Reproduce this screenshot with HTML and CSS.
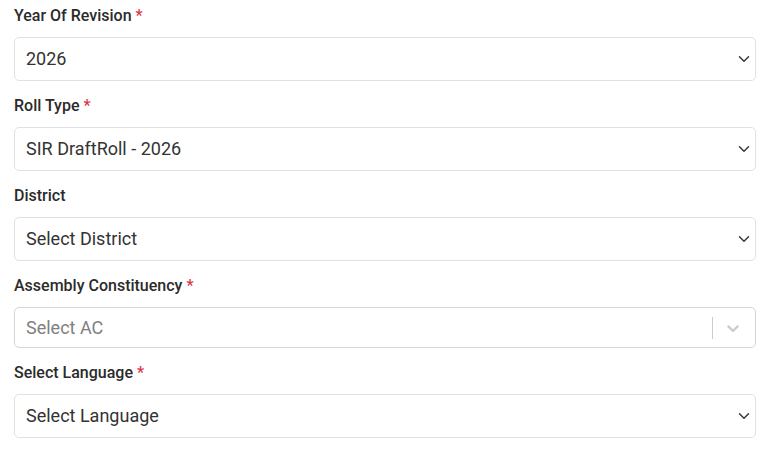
FILE: index.html
```html
<!DOCTYPE html>
<html lang="en">
<head>
<meta charset="utf-8">
<link rel="stylesheet" href="styles.css">
</head>
<body>
<form class="form">
  <div class="group">
    <label class="label">Year Of Revision <span class="req">*</span></label>
    <div class="select">
      <span class="value">2026</span>
      <svg class="chev" viewBox="0 0 16 16" width="12" height="12"><path d="m2 5 6 6 6-6" fill="none" stroke="#343a40" stroke-width="2" stroke-linecap="round" stroke-linejoin="round"/></svg>
    </div>
  </div>
  <div class="group">
    <label class="label">Roll Type <span class="req">*</span></label>
    <div class="select">
      <span class="value">SIR DraftRoll - 2026</span>
      <svg class="chev" viewBox="0 0 16 16" width="12" height="12"><path d="m2 5 6 6 6-6" fill="none" stroke="#343a40" stroke-width="2" stroke-linecap="round" stroke-linejoin="round"/></svg>
    </div>
  </div>
  <div class="group">
    <label class="label">District</label>
    <div class="select">
      <span class="value">Select District</span>
      <svg class="chev" viewBox="0 0 16 16" width="12" height="12"><path d="m2 5 6 6 6-6" fill="none" stroke="#343a40" stroke-width="2" stroke-linecap="round" stroke-linejoin="round"/></svg>
    </div>
  </div>
  <div class="group">
    <label class="label">Assembly Constituency <span class="req">*</span></label>
    <div class="rselect">
      <span class="placeholder">Select AC</span>
      <span class="sep"></span>
      <svg class="rchev" viewBox="0 0 20 20" width="20" height="20"><path d="M4.516 7.548c0.436-0.446 1.043-0.481 1.576 0l3.908 3.747 3.908-3.747c0.533-0.481 1.141-0.446 1.574 0 0.436 0.445 0.408 1.197 0 1.615-0.406 0.418-4.695 4.502-4.695 4.502-0.217 0.223-0.502 0.335-0.787 0.335s-0.57-0.112-0.789-0.335c0 0-4.287-4.084-4.695-4.502s-0.436-1.170 0-1.615z" fill="#cccccc"/></svg>
    </div>
  </div>
  <div class="group">
    <label class="label">Select Language <span class="req">*</span></label>
    <div class="select">
      <span class="value">Select Language</span>
      <svg class="chev" viewBox="0 0 16 16" width="12" height="12"><path d="m2 5 6 6 6-6" fill="none" stroke="#343a40" stroke-width="2" stroke-linecap="round" stroke-linejoin="round"/></svg>
    </div>
  </div>
</form>
</body>
</html>
```
FILE: styles.css
```css
html, body {
  margin: 0;
  padding: 0;
  background: #ffffff;
}
body {
  font-family: Roboto, "Liberation Sans", sans-serif;
  color: #212529;
}
.form {
  padding: 5px 12px 0 14px;
  display: flex;
  flex-direction: column;
  gap: 14px;
}
.group {
  display: flex;
  flex-direction: column;
}
.label {
  font-size: 16px;
  font-weight: 500;
  line-height: 22px;
  margin-bottom: 10px;
  color: #2b2b2b;
}
.req {
  color: #dc3545;
}
.select {
  box-sizing: border-box;
  height: 44px;
  border: 1px solid #dee2e6;
  border-radius: 5px;
  display: flex;
  align-items: center;
  justify-content: space-between;
  padding: 0 5px 0 11px;
  font-size: 18px;
  color: #333333;
}
.value {
  line-height: 24px;
}
.chev {
  display: block;
}
.rselect {
  box-sizing: border-box;
  height: 41px;
  border: 1px solid #d6d6d6;
  border-radius: 5px;
  display: flex;
  align-items: center;
  padding: 0 12px 0 11px;
  font-size: 18px;
}
.placeholder {
  flex: 1;
  color: #808080;
}
.sep {
  width: 1px;
  height: 22px;
  background: #cccccc;
  margin-right: 10px;
}
.rchev {
  display: block;
}
```
